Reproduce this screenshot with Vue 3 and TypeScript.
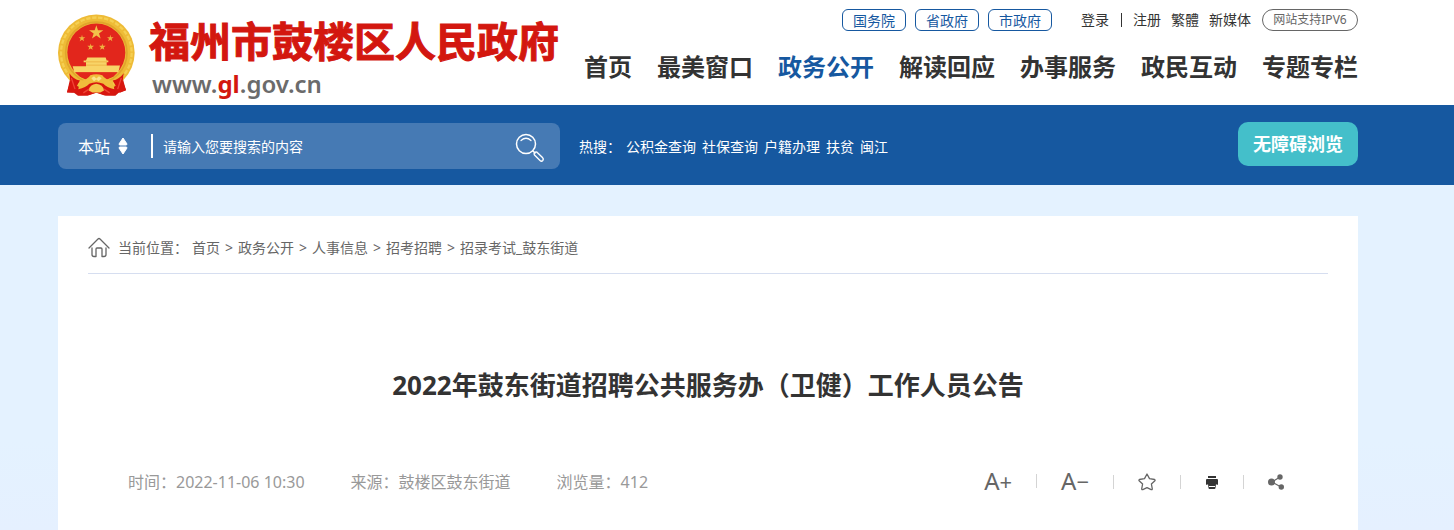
<script setup lang="ts">
import { ref } from 'vue'

const scope = ref('site')
const keyword = ref('')

const govLinks: string[] = ['国务院', '省政府', '市政府']
const navItems: string[] = ['首页', '最美窗口', '政务公开', '解读回应', '办事服务', '政民互动', '专题专栏']
const activeNav = '政务公开'
const hotWords: string[] = ['公积金查询', '社保查询', '户籍办理', '扶贫', '闽江']
const crumbs: string[] = ['首页', '政务公开', '人事信息', '招考招聘', '招录考试_鼓东街道']
const meta: { label: string; value: string }[] = [
  { label: '时间：', value: '2022-11-06 10:30' },
  { label: '来源：', value: '鼓楼区鼓东街道' },
  { label: '浏览量：', value: '412' },
]
</script>

<template>
  <div class="page">
    <header class="header wrap">
      <a class="logo" href="#">
        <svg class="emblem" viewBox="24 42 231 246" aria-hidden="true">
          <path d="M62 205 L54 228 L60 236 L51 276 L72 277 L84 286 L112 285 L139 276 L168 285 L196 286 L206 277 L228 270 L219 236 L226 222 L216 205Z" fill="#d3170f" />
          <circle cx="139" cy="157" r="115" fill="#eebb36" />
          <circle cx="139" cy="157" r="106" fill="none" stroke="#f5cf52" stroke-width="7" stroke-dasharray="13 5" />
          <circle cx="139" cy="157" r="92" fill="none" stroke="#e0a52c" stroke-width="5" />
          <circle cx="139" cy="156" r="87" fill="#e2261c" />
          <path d="M139 74 L144 89 L160 89 L147 99 L152 114 L139 105 L126 114 L131 99 L117 89 L134 89Z" fill="#f2c14a" />
          <g fill="#eeb240">
            <path d="M96 103 L98 110 L106 110 L100 115 L102 122 L96 118 L89 122 L92 115 L86 110 L94 110Z" />
            <path d="M181 103 L183 110 L191 110 L185 115 L187 122 L181 118 L174 122 L177 115 L171 110 L179 110Z" />
            <path d="M122 129 L124 136 L132 136 L126 141 L128 148 L122 144 L115 148 L118 141 L112 136 L120 136Z" />
            <path d="M157 129 L159 136 L167 136 L161 141 L163 148 L157 144 L150 148 L153 141 L147 136 L155 136Z" />
          </g>
          <path d="M112 171 H167 L170 180 H175 V185 H170 V195 H210 L205 215 H73 L68 197 H108 V185 H101 V180 H108Z" fill="#f8d467" />
          <path d="M107 184 H171 M108 194 H171" stroke="#e9a836" stroke-width="2" />
          <path d="M77 216 H202 L190 229 L160 239 H118 L90 229Z" fill="#e2261c" />
          <path d="M58 218 Q70 236 90 240 L80 257 L86 274 L68 276 L51 275 L61 244Z M221 218 Q208 236 188 240 L198 257 L192 274 L212 276 L228 268 L218 244Z" fill="#d8160f" />
          <path d="M90 240 Q112 239 121 224 Q139 218 157 224 Q166 239 188 240 L193 266 Q174 276 139 276 Q104 276 85 266Z" fill="#f0bd3c" />
          <path d="M85 266 Q108 262 118 250 Q139 240 160 250 Q170 262 193 266 L192 284 L164 285 L139 277 L114 285 L86 284Z" fill="#d8160f" />
          <path d="M116 270 Q119 252 139 250 Q159 252 162 270 L151 276 H127Z" fill="#f3c64c" />
          <path d="M124 233 L132 227 L139 234 L147 227 L155 233 L146 242 L139 237 L132 242Z" fill="#fbe28a" />
          <path d="M64 232 L75 266 M214 232 L203 266 M100 277 L117 266 M179 277 L162 266" fill="none" stroke="#f04536" stroke-width="4" />
        </svg>
        <span class="logo-text">
          <span class="logo-name">福州市鼓楼区人民政府</span>
          <span class="logo-url">www.<b>gl</b>.gov.cn</span>
        </span>
      </a>

      <div class="header-right">
        <div class="topline">
          <div class="gov">
            <a v-for="g in govLinks" :key="g" href="#" class="gov-link">{{ g }}</a>
          </div>
          <div class="user">
            <a href="#">登录</a>
            <i class="bar"></i>
            <a href="#">注册</a>
            <a href="#" class="spaced">繁體</a>
            <a href="#" class="spaced">新媒体</a>
            <a href="#" class="ipv6">网站支持IPV6</a>
          </div>
        </div>
        <nav class="nav">
          <a v-for="n in navItems" :key="n" href="#" :class="{ active: n === activeNav }">{{ n }}</a>
        </nav>
      </div>
    </header>

    <section class="searchbar">
      <div class="wrap search-inner">
        <form class="search" @submit.prevent>
          <label class="scope">
            <select v-model="scope" aria-label="搜索范围">
              <option value="site">本站</option>
            </select>
            <svg width="10" height="18" viewBox="0 0 10 18" aria-hidden="true">
              <path d="M5 1 L9 7 Q9 8 8 8 H2 Q1 8 1 7Z M5 17 L9 11 Q9 10 8 10 H2 Q1 10 1 11Z" fill="#fff" stroke="#fff" stroke-linejoin="round" />
            </svg>
          </label>
          <input v-model="keyword" type="text" aria-label="搜索内容" placeholder="请输入您要搜索的内容" />
          <button type="submit" class="search-btn" aria-label="搜索">
            <svg width="30" height="30" viewBox="0 0 30 30" fill="none" stroke="#fff" stroke-linecap="round" aria-hidden="true">
              <circle cx="11" cy="11" r="9.5" stroke-width="1.5" />
              <path d="M6 7.500 Q11 3 16 7.500" stroke-width="1.200" />
              <path d="M18 18 L20 20" stroke-width="1.500" />
              <path d="M19.500 22 L25 27.500 Q26.500 28.800 27.800 27.500 Q29 26 27.500 24.500 L22 19.200 Q20.800 18.500 19.700 19.500 Q18.500 20.800 19.500 22Z" stroke-width="1.400" />
            </svg>
          </button>
        </form>
        <div class="hot">
          <span class="hot-label">热搜：</span>
          <a v-for="h in hotWords" :key="h" href="#">{{ h }}</a>
        </div>
        <button type="button" class="a11y">无障碍浏览</button>
      </div>
    </section>

    <main class="wrap main">
      <article class="card">
        <nav class="crumbs" aria-label="当前位置">
          <svg width="22" height="21" viewBox="0 0 22 21" fill="none" stroke="#666" stroke-width="1.300" stroke-linecap="round" stroke-linejoin="round" aria-hidden="true">
            <path d="M1 11 L10 2 Q11 1 12 2 L21 11" />
            <path d="M4 11 V17.500 Q4 19.500 6 19.500 H8 V12 Q8 11 9 11 H13 Q14 11 14 12 V19.500 H16 Q18 19.500 18 17.500 V11" />
          </svg>
          <span class="crumb-label">当前位置：</span>
          <template v-for="(c, i) in crumbs" :key="c">
            <span v-if="i > 0" class="sep">&gt;</span>
            <a href="#">{{ c }}</a>
          </template>
        </nav>

        <h1>2022年鼓东街道招聘公共服务办（卫健）工作人员公告</h1>

        <div class="info">
          <div class="meta">
            <span v-for="m in meta" :key="m.label">{{ m.label }}{{ m.value }}</span>
          </div>
          <div class="tools">
            <button type="button" class="font-btn" aria-label="放大字体">A<span>+</span></button>
            <button type="button" class="font-btn" aria-label="缩小字体">A<span>−</span></button>
            <button type="button" aria-label="收藏">
              <svg width="18" height="18" viewBox="0 0 18 18" fill="none" stroke="#666" stroke-width="1.300" stroke-linejoin="round" aria-hidden="true">
                <path d="M9 1 L11.500 5.600 L16.600 6.500 Q17.500 7 16.900 7.700 L13.400 11 L14.300 15.900 Q14.200 17 13.200 16.600 L9 14.600 L4.800 16.600 Q3.800 17 3.700 15.900 L4.600 11 L1.100 7.700 Q0.500 7 1.400 6.500 L6.500 5.600Z" />
              </svg>
            </button>
            <button type="button" aria-label="打印">
              <svg width="14" height="14" viewBox="0 0 14 14" fill="#333" aria-hidden="true">
                <path d="M3 1 H11 V3 H3Z M2 4 H12 Q13 4 13 5 V9 Q13 10 12 10 H11.500 V9 H2.500 V10 H2 Q1 10 1 9 V5 Q1 4 2 4Z" />
                <path d="M3 9 H11 L10.500 13 Q10.400 14 9.500 14 H4.500 Q3.600 14 3.500 13Z M4 11 V12 H10 V11Z" fill-rule="evenodd" />
              </svg>
            </button>
            <button type="button" aria-label="分享">
              <svg width="16" height="16" viewBox="0 0 16 16" fill="#666" aria-hidden="true">
                <path d="M12 3 L4 8 L13 13" fill="none" stroke="#666" stroke-width="1.200" />
                <circle cx="3.500" cy="8" r="3.500" />
                <circle cx="12" cy="3" r="2.700" />
                <circle cx="13.300" cy="13" r="2.700" />
              </svg>
            </button>
          </div>
        </div>
      </article>
    </main>
  </div>
</template>

<style>
body {
  background: #e4f1ff;
}
</style>

<style scoped>
.page {
  min-height: 100vh;
  display: flex;
  flex-direction: column;
  box-sizing: border-box;
  font-family: "Noto Sans", "Noto Sans CJK SC", sans-serif;
  font-size: 14px;
  line-height: 20px;
  color: #333;
  background: linear-gradient(#e4f2ff 0, #e4f2ff 440px, #e5f0ff 530px);
}
.page a {
  color: inherit;
  text-decoration: none;
  white-space: nowrap;
}
button,
input,
select {
  font: inherit;
  color: inherit;
  border: 0;
  padding: 0;
  margin: 0;
  background: none;
}
button {
  cursor: pointer;
}
svg {
  display: block;
  flex: none;
}
.wrap {
  padding-left: 58px;
  padding-right: 96px;
}
.header {
  display: flex;
  justify-content: space-between;
  min-height: 105px;
  box-sizing: border-box;
  background: #fff;
}
.logo {
  display: flex;
  padding-top: 14px;
}
.emblem {
  width: 77px;
  height: 83px;
}
.logo-text {
  display: flex;
  flex-direction: column;
  padding-left: 14px;
}
.logo-name {
  font-family: "Liberation Sans", "Noto Sans CJK SC", sans-serif;
  font-size: 41px;
  line-height: 58px;
  font-weight: 700;
  color: #d3170f;
  -webkit-text-stroke: 1px #d3170f;
}
.logo-url {
  padding-left: 3px;
  font-size: 24px;
  line-height: 24px;
  font-weight: 600;
  color: #6b6b6b;
}
.logo-url b {
  font-weight: 700;
  color: #d3170f;
}
.header-right {
  display: flex;
  flex-direction: column;
  align-items: flex-end;
  padding-top: 9px;
}
.topline,
.user,
.gov {
  display: flex;
  align-items: center;
}
.gov {
  gap: 9px;
  margin-right: 29px;
}
.gov-link {
  width: 64px;
  height: 22px;
  line-height: 22px;
  box-sizing: border-box;
  text-align: center;
  border: 1px solid #1658a0;
  border-radius: 6px;
}
.page .gov-link {
  color: #1658a0;
}
.bar {
  width: 1px;
  height: 14px;
  margin: 0 11px 0 12px;
  background: #333;
}
.spaced {
  margin-left: 10px;
}
.ipv6 {
  width: 96px;
  height: 22px;
  margin-left: 11px;
  box-sizing: border-box;
  text-align: center;
  font-size: 12px;
  line-height: 20px;
  border: 1px solid #666;
  border-radius: 11px;
}
.page .ipv6 {
  color: #666;
}
.nav {
  display: flex;
  gap: 25px;
  margin-top: 18px;
  font-size: 24px;
  line-height: 36px;
  font-weight: 700;
}
.page .nav .active {
  color: #1658a0;
}
.searchbar {
  background: #1658a0;
  color: #fff;
}
.search-inner {
  display: flex;
  align-items: center;
  min-height: 80px;
}
.search {
  display: flex;
  align-items: center;
  flex: 0 1 502px;
  height: 46px;
  margin-top: 2px;
  background: #467ab4;
  border-radius: 8px;
}
.scope {
  display: flex;
  align-items: center;
  gap: 7px;
  height: 24px;
  margin-left: 20px;
  padding-right: 23px;
  border-right: 2px solid #fff;
}
.scope select {
  appearance: none;
  width: 33px;
  padding-top: 2px;
  font-size: 16px;
  line-height: 24px;
}
.search input {
  flex: 1;
  min-width: 0;
  height: 40px;
  padding-left: 10px;
  outline: 0;
}
.search input::placeholder {
  color: #fff;
  opacity: 1;
}
.search-btn {
  padding: 8px 15px 4px;
}
.hot {
  display: flex;
  gap: 6px;
  flex: 1;
  margin-left: 19px;
  padding-top: 4px;
}
.hot-label {
  margin-right: -1px;
  white-space: nowrap;
}
.a11y {
  width: 120px;
  height: 44px;
  margin-bottom: 2px;
  font-size: 18px;
  font-weight: 700;
  background: #44bfca;
  border-radius: 10px;
}
.main {
  flex: 1;
  display: flex;
  padding-top: 31px;
}
.card {
  flex: 1;
  padding: 0 30px;
  background: #fff;
}
.crumbs {
  display: flex;
  align-items: center;
  box-sizing: border-box;
  min-height: 58px;
  padding-top: 6px;
  color: #666;
  border-bottom: 1px solid #d6def0;
}
.crumbs svg {
  margin-right: 8px;
}
.crumb-label {
  margin-right: 4px;
}
.sep {
  margin: 0 5px;
}
h1 {
  margin: 91px 0 0;
  font-size: 26px;
  line-height: 40px;
  font-weight: 700;
  text-align: center;
}
.info {
  display: flex;
  justify-content: space-between;
  align-items: center;
  margin-top: 61px;
  padding: 0 44px 0 40px;
  min-height: 32px;
}
.meta {
  display: flex;
  gap: 46px;
  font-size: 16px;
  line-height: 24px;
  color: #999;
}
.tools {
  display: flex;
  align-items: center;
}
.tools button {
  display: flex;
  align-items: center;
  justify-content: center;
}
.tools button + button::before {
  content: "";
  width: 1px;
  height: 14px;
  margin: 0 24px;
  background: #d4d4d4;
}
.font-btn {
  font-size: 24px;
  line-height: 30px;
  padding-bottom: 2px;
  color: #666;
}
.font-btn span {
  font-size: 22px;
}
</style>
